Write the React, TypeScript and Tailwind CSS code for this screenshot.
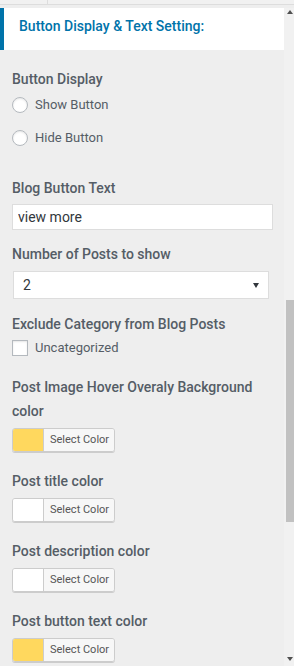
const colorFields = [
  { label: "Post Image Hover Overaly Background color", color: "#ffd85e" },
  { label: "Post title color", color: "#ffffff" },
  { label: "Post description color", color: "#ffffff" },
  { label: "Post button text color", color: "#ffd85e" },
];

const Label = ({ children, className = "" }: { children: React.ReactNode; className?: string }) => (
  <div className={`text-[14px] leading-[24px] font-medium text-[#555d66] ${className}`}>{children}</div>
);

const Radio = ({ text, className = "" }: { text: string; className?: string }) => (
  <div className={`flex h-[16px] items-center ${className}`}>
    <span className="h-4 w-4 shrink-0 rounded-full border border-[#b4b9be] bg-white shadow-[inset_0_1px_2px_rgba(0,0,0,0.1)]" />
    <span className="ml-[7px] text-[13px] text-[#555d66]">{text}</span>
  </div>
);

const ColorButton = ({ color }: { color: string }) => (
  <div className="mt-[5px] flex h-[24px] w-[103px] overflow-hidden rounded-[3px] border border-[#cccccc] shadow-[0_1px_0_#cccccc]">
    <span className="w-[30px]" style={{ backgroundColor: color }} />
    <span className="flex-1 border-l border-[#cccccc] bg-[#f7f7f7] pl-[6px] text-[11px] leading-[22px] text-[#555555]">
      Select Color
    </span>
  </div>
);

const Scrollbar = () => (
  <div className="flex h-[658px] w-[10px] flex-col bg-[#f1f1f1]">
    <svg className="ml-[3px] mt-[2px]" width="6" height="4" viewBox="0 0 6 4">
      <polygon points="0,4 3,0 6,4" fill="#505050" />
    </svg>
    <div className="ml-[2px] mt-[286px] h-[222px] w-[8px] bg-[#c1c1c1]" />
    <div className="flex-1" />
    <svg className="mb-[5px] ml-[3px]" width="6" height="4" viewBox="0 0 6 4">
      <polygon points="0,0 6,0 3,4" fill="#505050" />
    </svg>
  </div>
);

const App = () => {
  return (
    <div className="h-[666px] w-[294px] overflow-hidden bg-[#eeeeee] font-[Roboto,sans-serif]">
      <div className="flex h-[5px] border-b border-[#dddddd] bg-[#f1f1f1]">
        <div className="w-[48px] border-r border-[#dddddd]" />
      </div>
      <div className="flex pt-[3px]">
        <div className="w-[284px]">
          <div className="h-[42px] border-l-4 border-[#0073aa] bg-white pl-[15px] pt-[8px] text-[14px] leading-[20px] font-medium text-[#0073aa]">
            Button Display &amp; Text Setting:
          </div>
          <div className="px-[12px]">
            <Label className="mt-[17px]">Button Display</Label>
            <Radio text="Show Button" className="mt-[6px]" />
            <Radio text="Hide Button" className="mt-[17px]" />

            <Label className="mt-[30px]">Blog Button Text</Label>
            <input
              readOnly
              value="view more"
              className="mt-[4px] block h-[26px] w-[261px] border border-[#dddddd] bg-white px-[5px] text-[14px] text-[#32373c] outline-none"
            />

            <Label className="mt-[12px]">Number of Posts to show</Label>
            <div className="ml-[1px] mt-[5px] flex h-[28px] w-[256px] items-center justify-between border border-[#dddddd] bg-white pl-[9px] pr-[9px] text-[14px] text-[#32373c]">
              <span>2</span>
              <svg width="6" height="5" viewBox="0 0 6 5">
                <polygon points="0,0 6,0 3,5" fill="#32373c" />
              </svg>
            </div>

            <Label className="mt-[13px]">Exclude Category from Blog Posts</Label>
            <div className="mt-[4px] flex h-[16px] items-center">
              <span className="h-4 w-4 shrink-0 border border-[#b4b9be] bg-white shadow-[inset_0_1px_2px_rgba(0,0,0,0.1)]" />
              <span className="ml-[7px] text-[13px] text-[#555d66]">Uncategorized</span>
            </div>

            {colorFields.map((field, index) => (
              <div key={field.label} className={index === 0 ? "mt-[19px]" : "mt-[17px]"}>
                <Label>{field.label}</Label>
                <ColorButton color={field.color} />
              </div>
            ))}
          </div>
        </div>
        <Scrollbar />
      </div>
    </div>
  );
};

export default App;
